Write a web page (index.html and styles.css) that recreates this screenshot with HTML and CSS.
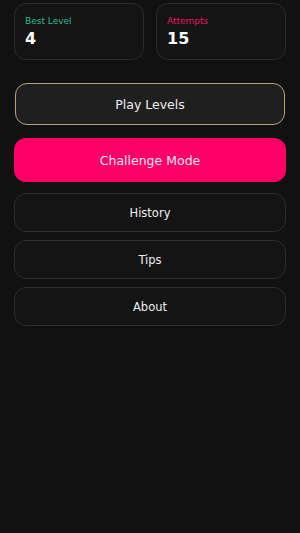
FILE: index.html
```html
<!DOCTYPE html>
<html>
	<head>
		<title>Menu</title>
		<meta charset="utf-8"/>
		<link rel="stylesheet" href="styles.css">
	</head>
	<body>
		<div id="menu">
			<div class="stats">
				<div class="stat">
					<div class="statLabel best">Best Level</div>
					<div class="statValue">4</div>
				</div>
				<div class="stat">
					<div class="statLabel tries">Attempts</div>
					<div class="statValue">15</div>
				</div>
			</div>
			<div class="buttons">
				<div class="btn play">Play Levels</div>
				<div class="btn challenge">Challenge Mode</div>
				<div class="btn">History</div>
				<div class="btn">Tips</div>
				<div class="btn">About</div>
			</div>
		</div>
	</body>
</html>
```

FILE: styles.css
```css
html { width:100%; height:100%; }
body {
	margin:0px;
	background:#111111;
	color:#f2f2f2;
	font-family:"DejaVu Sans", sans-serif;
	width:100%;
	height:100%;
}
#menu {
	padding:3px 14px 0 14px;
}
.stats {
	display:grid;
	grid-template-columns:1fr 1fr;
	gap:12px;
}
.stat {
	height:57px;
	box-sizing:border-box;
	border:1px solid #2c2c2c;
	border-radius:12px;
	background:#141414;
	padding:11px 10px 0 10px;
}
.statLabel {
	font-size:9px;
	line-height:12px;
}
.best { color:#2fb896; }
.tries { color:#e0185f; }
.statValue {
	font-size:16px;
	font-weight:bold;
	line-height:18px;
	margin-top:3px;
	color:#ffffff;
}
.buttons {
	margin-top:23px;
	display:flex;
	flex-direction:column;
	gap:8px;
}
.btn {
	height:39px;
	box-sizing:border-box;
	border:1px solid #2e2e2e;
	border-radius:12px;
	background:#141414;
	display:flex;
	justify-content:center;
	align-items:center;
	font-size:11.5px;
	color:#eeeeee;
}
.play {
	height:42px;
	margin:0 1px 5px 1px;
	border:1px solid #b9a376;
	background:#1f1f1f;
	font-size:12.5px;
}
.challenge {
	height:44px;
	margin-bottom:3px;
	border:none;
	background:#ff0066;
	font-size:12.5px;
	color:#fde6ee;
}
```
